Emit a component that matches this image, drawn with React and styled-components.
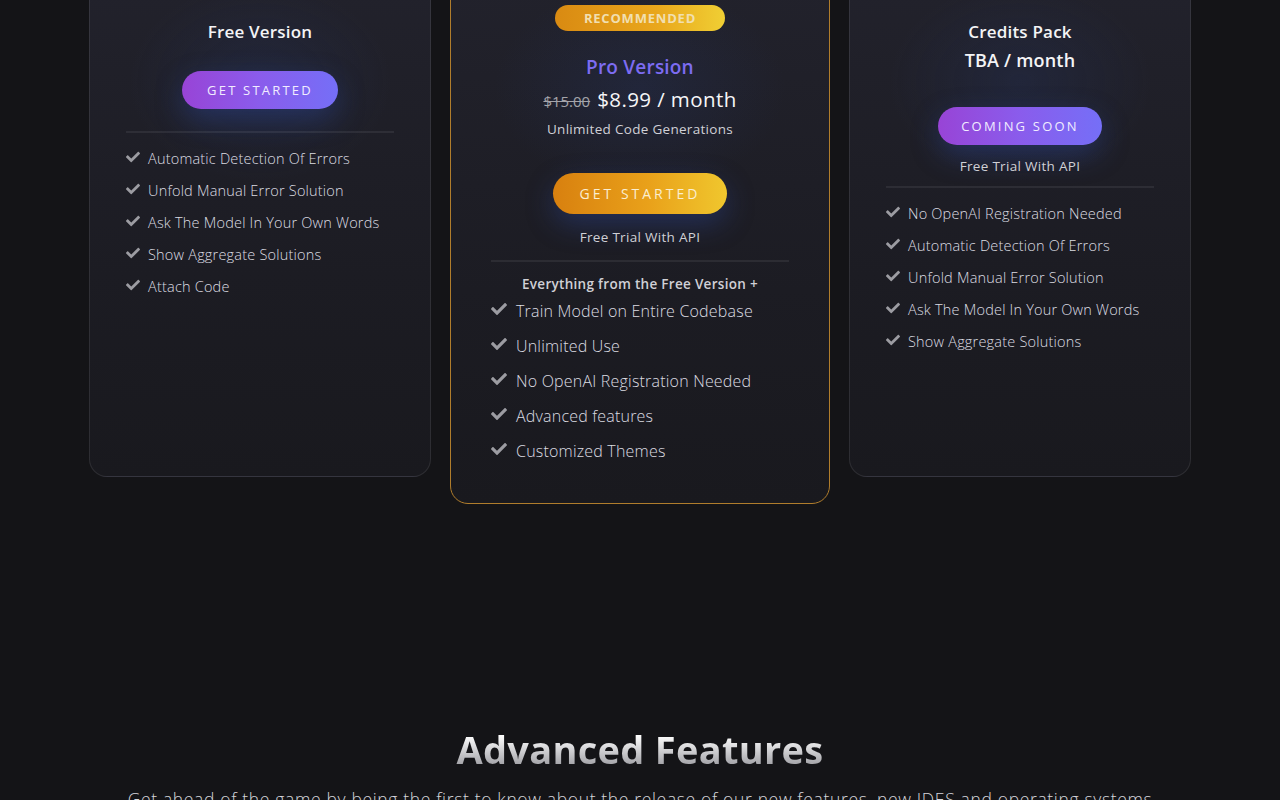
import styled, { createGlobalStyle } from 'styled-components'
import { FaCheck } from 'react-icons/fa'

const GlobalStyle = createGlobalStyle`
    html, body {
        margin: 0;
        padding: 0;
        background: #141417;
        overflow: hidden;
    }
    body {
        font-family: 'Open Sans', 'Noto Sans', sans-serif;
        color: #e6e6ea;
    }
`

const Page = styled.div`
    width: 1280px;
    height: 800px;
    overflow: hidden;
    background: #141417;
`

const CardsRow = styled.div`
    display: flex;
    justify-content: center;
    align-items: flex-start;
    gap: 19px;
    margin-top: -30px;
`

const Card = styled.div`
    box-sizing: border-box;
    width: ${(p) => (p.$featured ? 380 : 342)}px;
    height: ${(p) => (p.$featured ? 534 : 507)}px;
    border-radius: 18px;
    border: 1px solid ${(p) => (p.$featured ? '#b07d2c' : 'rgba(255, 255, 255, 0.09)')};
    background:
        radial-gradient(ellipse 55% 28% at 50% 22%, rgba(40, 60, 120, 0.22), transparent 70%),
        linear-gradient(180deg, #22222c 0%, #1c1c23 60%, #19191e 100%);
    display: flex;
    flex-direction: column;
    align-items: center;
    padding: ${(p) => p.$pt}px ${(p) => (p.$featured ? 40 : 36)}px 0;
`

const Badge = styled.div`
    width: 170px;
    height: 26px;
    border-radius: 13px;
    background: linear-gradient(90deg, #d98a12 0%, #e9a71c 60%, #f0cf34 100%);
    color: #f1dfb0;
    font-family: 'Open Sans', sans-serif;
    font-weight: 700;
    font-size: 13px;
    letter-spacing: 0.8px;
    display: flex;
    align-items: center;
    justify-content: center;
    margin-bottom: 22px;
`

const Title = styled.h3`
    margin: 0;
    font-family: 'Open Sans', sans-serif;
    font-weight: 600;
    font-size: ${(p) => p.$size || 17}px;
    line-height: 28px;
    color: ${(p) => p.$color || '#f4f4f6'};
    letter-spacing: 0.2px;
    text-align: center;
`

const Price = styled.div`
    display: flex;
    align-items: baseline;
    gap: 7px;
    margin-top: 4px;
    font-family: 'Open Sans', sans-serif;
    line-height: 28px;
`

const OldPrice = styled.span`
    font-size: 15px;
    color: #a4a4aa;
    text-decoration: line-through;
`

const NewPrice = styled.span`
    font-size: 20.5px;
    font-weight: 500;
    color: #f6f6f8;
    letter-spacing: 0.4px;
`

const Caption = styled.div`
    font-size: 13.5px;
    font-weight: ${(p) => (p.$bold ? 600 : 500)};
    color: #d0d0d6;
    letter-spacing: 0.3px;
    line-height: 20px;
    margin-top: ${(p) => p.$mt || 0}px;
    text-align: center;
`

const CtaButton = styled.button`
    border: none;
    cursor: pointer;
    width: ${(p) => p.$w}px;
    height: ${(p) => p.$h}px;
    border-radius: ${(p) => p.$h / 2}px;
    margin-top: ${(p) => p.$mt}px;
    font-family: 'Open Sans', sans-serif;
    font-size: ${(p) => (p.$gold ? 14 : 13)}px;
    letter-spacing: ${(p) => (p.$gold ? 3 : 2.2)}px;
    color: ${(p) => (p.$gold ? '#fbeed0' : '#f1ecff')};
    background: ${(p) =>
        p.$gold
            ? 'linear-gradient(90deg, #d8800f 0%, #e9a11a 55%, #f0c72e 100%)'
            : 'linear-gradient(90deg, #9844d6 0%, #8a5cec 50%, #756ff7 100%)'};
    box-shadow: 0 10px 28px rgba(50, 80, 180, 0.35);
`

const Divider = styled.hr`
    align-self: stretch;
    border: none;
    height: 2px;
    background: rgba(255, 255, 255, 0.07);
    margin: ${(p) => p.$mt}px 0 0;
`

const FeatureList = styled.ul`
    list-style: none;
    align-self: stretch;
    margin: ${(p) => p.$mt}px 0 0;
    padding: 0;
    display: flex;
    flex-direction: column;
    gap: ${(p) => (p.$large ? 13 : 10)}px;
`

const Feature = styled.li`
    display: flex;
    align-items: center;
    gap: ${(p) => (p.$large ? 9 : 8)}px;
    font-size: ${(p) => (p.$large ? 16 : 14.5)}px;
    line-height: 22px;
    font-weight: 300;
    color: #dcdce2;
    letter-spacing: 0.2px;

    svg {
        flex-shrink: 0;
        color: #9c9ca2;
        margin-top: -4px;
    }
`

const Section = styled.section`
    margin-top: 222px;
    text-align: center;
`

const SectionTitle = styled.h2`
    margin: 0;
    font-family: 'Open Sans', sans-serif;
    font-weight: 700;
    font-size: 38px;
    line-height: 46px;
    letter-spacing: 0.3px;
    background: linear-gradient(180deg, #ffffff 20%, #8d8d93 100%);
    -webkit-background-clip: text;
    background-clip: text;
    color: transparent;
`

const SectionText = styled.p`
    margin: 14px 0 0;
    font-size: 17.5px;
    line-height: 26px;
    font-weight: 300;
    color: #d6d6dc;
    letter-spacing: 0.65px;
    white-space: nowrap;
`

const freeFeatures = [
    'Automatic Detection Of Errors',
    'Unfold Manual Error Solution',
    'Ask The Model In Your Own Words',
    'Show Aggregate Solutions',
    'Attach Code',
]

const proFeatures = [
    'Train Model on Entire Codebase',
    'Unlimited Use',
    'No OpenAI Registration Needed',
    'Advanced features',
    'Customized Themes',
]

const creditFeatures = [
    'No OpenAI Registration Needed',
    'Automatic Detection Of Errors',
    'Unfold Manual Error Solution',
    'Ask The Model In Your Own Words',
    'Show Aggregate Solutions',
]

const Features = ({ items, large, mt }) => (
    <FeatureList $large={large} $mt={mt}>
        {items.map((f) => (
            <Feature key={f} $large={large}>
                <FaCheck size={large ? 16 : 14} />
                {f}
            </Feature>
        ))}
    </FeatureList>
)

export default function App() {
    return (
        <Page>
            <GlobalStyle />
            <CardsRow>
                <Card $pt={47}>
                    <Title>Free Version</Title>
                    <CtaButton $w={156} $h={38} $mt={25}>GET STARTED</CtaButton>
                    <Divider $mt={22} />
                    <Features items={freeFeatures} mt={15} />
                </Card>

                <Card $featured $pt={34}>
                    <Badge>RECOMMENDED</Badge>
                    <Title $color="#7d6cf2" $size={19}>Pro Version</Title>
                    <Price>
                        <OldPrice>$15.00</OldPrice>
                        <NewPrice>$8.99 / month</NewPrice>
                    </Price>
                    <Caption $mt={4}>Unlimited Code Generations</Caption>
                    <CtaButton $gold $w={174} $h={41} $mt={34}>GET STARTED</CtaButton>
                    <Caption $mt={13}>Free Trial With API</Caption>
                    <Divider $featured $mt={13} />
                    <Caption $bold $mt={12}>Everything from the Free Version +</Caption>
                    <Features items={proFeatures} large mt={6} />
                </Card>

                <Card $pt={47}>
                    <Title>Credits Pack</Title>
                    <Title $size={18}>TBA / month</Title>
                    <CtaButton $w={164} $h={38} $mt={33}>COMING SOON</CtaButton>
                    <Caption $mt={11}>Free Trial With API</Caption>
                    <Divider $mt={10} />
                    <Features items={creditFeatures} mt={15} />
                </Card>
            </CardsRow>

            <Section>
                <SectionTitle>Advanced Features</SectionTitle>
                <SectionText>
                    Get ahead of the game by being the first to know about the release of our new features, new IDES and operating systems
                </SectionText>
            </Section>
        </Page>
    )
}
